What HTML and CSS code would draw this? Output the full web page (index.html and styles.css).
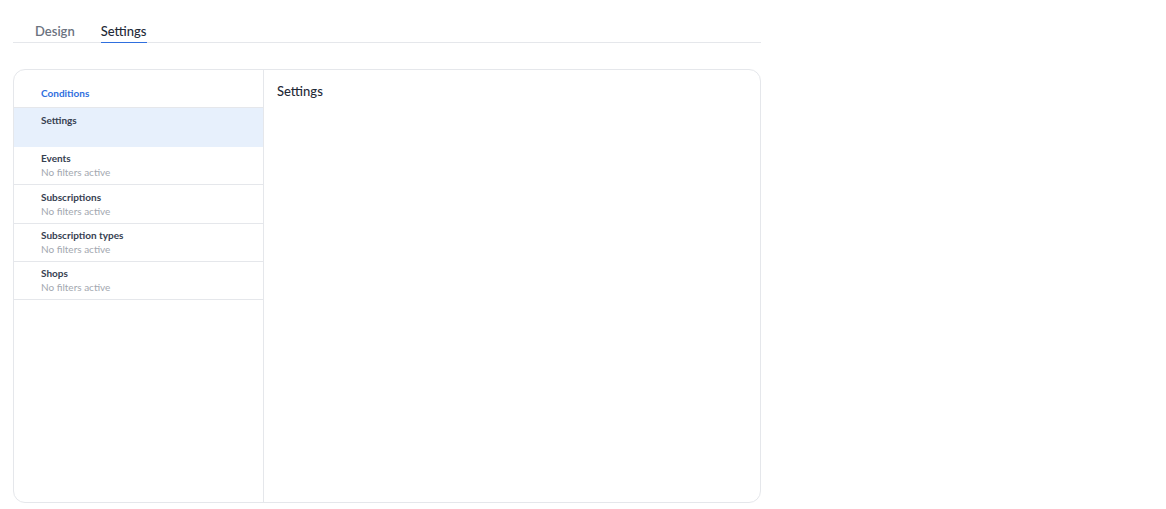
FILE: index.html
```html
<!DOCTYPE html>
<html lang="en">
<head>
  <meta charset="UTF-8">
  <meta name="viewport" content="width=device-width, initial-scale=1.0">
  <title>Settings</title>
  <link rel="stylesheet" href="styles.css">
</head>
<body>
  <div class="page">
    <!-- Tabs -->
    <nav class="tabs">
      <span class="tab">Design</span>
      <span class="tab active">Settings</span>
    </nav>

    <div class="panel">
      <aside class="sidebar">
        <div class="sidebar-title">Conditions</div>
        <div class="item selected">
          <div class="item-name">Settings</div>
        </div>
        <div class="item">
          <div class="item-name">Events</div>
          <div class="item-sub">No filters active</div>
        </div>
        <div class="item tall">
          <div class="item-name">Subscriptions</div>
          <div class="item-sub">No filters active</div>
        </div>
        <div class="item">
          <div class="item-name">Subscription types</div>
          <div class="item-sub">No filters active</div>
        </div>
        <div class="item">
          <div class="item-name">Shops</div>
          <div class="item-sub">No filters active</div>
        </div>
      </aside>
      <main class="content">
        <h2 class="content-title">Settings</h2>
      </main>
    </div>
  </div>
</body>
</html>
```

FILE: styles.css
```css
* {
  margin: 0;
  padding: 0;
  box-sizing: border-box;
}

body {
  font-family: 'Lato', 'Noto Sans', sans-serif;
  background: #ffffff;
  color: #333;
}

.page {
  width: 748px;
  margin-left: 13px;
  padding-top: 22px;
}

.tabs {
  display: flex;
  gap: 26px;
  padding-left: 22px;
  border-bottom: 1px solid #e5e7eb;
}

.tab {
  font-size: 13px;
  font-weight: 600;
  color: #6b7280;
  line-height: 18px;
  padding-bottom: 2px;
  margin-bottom: -1px;
  border-bottom: 1px solid transparent;
}

.tab.active {
  color: #1f2937;
  font-weight: 500;
  border-bottom-color: #2f6fde;
}

.panel {
  margin-top: 26px;
  height: 434px;
  border: 1px solid #e5e7eb;
  border-radius: 12px;
  display: flex;
  overflow: hidden;
}

.sidebar {
  width: 250px;
  border-right: 1px solid #e5e7eb;
}

.sidebar-title {
  font-size: 10px;
  font-weight: 700;
  color: #2f6fde;
  padding: 17px 27px 7px;
  line-height: 13px;
  border-bottom: 1px solid #e5e7eb;
}

.item {
  height: 38px;
  padding: 4px 27px 0;
  border-bottom: 1px solid #e5e7eb;
  line-height: 14px;
}

.item.tall {
  height: 39px;
  padding-top: 5px;
}

.item.selected {
  height: 39px;
  padding-top: 5px;
  background: #e7f0fc;
  border-bottom-color: #e7f0fc;
}

.item-name {
  font-size: 10px;
  font-weight: 700;
  color: #374151;
}

.item-sub {
  font-size: 10px;
  color: #a3a8b0;
}

.content {
  flex: 1;
  padding: 13px 13px;
}

.content-title {
  font-size: 13px;
  font-weight: 500;
  color: #1f2937;
  line-height: 16px;
}
```
